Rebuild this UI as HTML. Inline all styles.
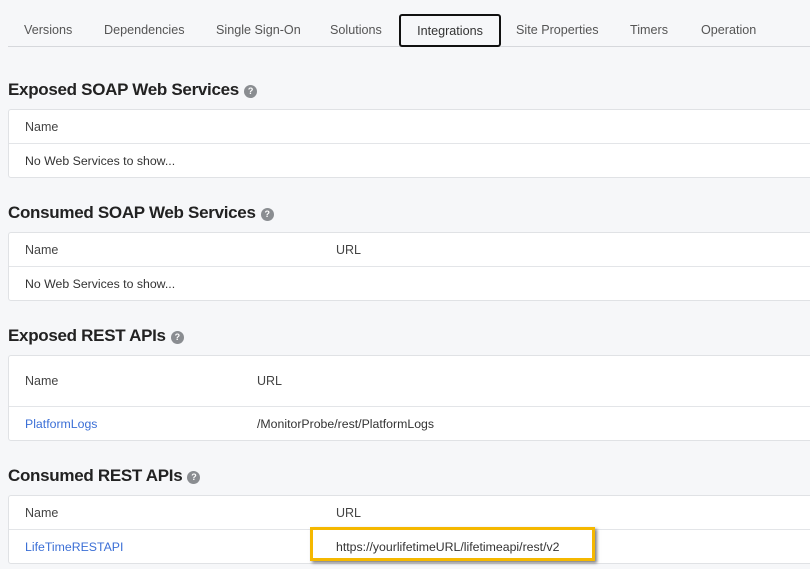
<!DOCTYPE html>
<html><head><style>
*{box-sizing:border-box;margin:0;padding:0}
body{width:810px;height:569px;overflow:hidden;background:#f6f7f9;font-family:"Liberation Sans",sans-serif;color:#333;position:relative}
.tabs{position:absolute;left:8px;right:0;top:46px;border-top:1px solid #d6d8dc}
.tab{position:absolute;top:23px;font-size:12.6px;color:#555}
.tabsel{position:absolute;left:399px;top:14px;width:102px;height:33px;border:2px solid #111;border-radius:3px;background:#f6f7f9;font-size:12.6px;color:#333;text-align:center;line-height:31px}
h2{position:absolute;left:8px;font-size:17px;font-weight:bold;color:#222;letter-spacing:-0.3px}
.q{display:inline-block;width:13px;height:13px;border-radius:50%;background:#8a8d91;color:#fff;font-size:9px;text-align:center;line-height:13px;vertical-align:1px;margin-left:5px}
.panel{position:absolute;left:8px;width:810px;background:#fff;border:1px solid #e0e2e5;border-radius:3px}
.row{position:relative;border-top:1px solid #e3e5e8;font-size:12.3px}
.row:first-child{border-top:none}
.c{position:absolute;top:50%;transform:translateY(-50%)}
.hd{font-weight:normal;color:#444;font-size:12.5px}
a{color:#3b6fd6;text-decoration:none}
.hl{position:absolute;left:310px;top:527px;width:285px;height:34px;border:3px solid #f5b800;box-shadow:2px 2px 3px rgba(0,0,0,.5)}
</style></head><body>
<div class="tabs"></div>
<div class="tab" style="left:24px">Versions</div>
<div class="tab" style="left:104px">Dependencies</div>
<div class="tab" style="left:216px">Single Sign-On</div>
<div class="tab" style="left:330px">Solutions</div>
<div class="tabsel">Integrations</div>
<div class="tab" style="left:516px">Site Properties</div>
<div class="tab" style="left:630px">Timers</div>
<div class="tab" style="left:701px">Operation</div>

<h2 style="top:80px">Exposed SOAP Web Services<span class="q">?</span></h2>
<div class="panel" style="top:109px">
<div class="row" style="height:33px"><span class="c hd" style="left:16px">Name</span></div>
<div class="row" style="height:34px"><span class="c" style="left:16px">No Web Services to show...</span></div>
</div>

<h2 style="top:203px">Consumed SOAP Web Services<span class="q">?</span></h2>
<div class="panel" style="top:232px">
<div class="row" style="height:33px"><span class="c hd" style="left:16px">Name</span><span class="c hd" style="left:327px">URL</span></div>
<div class="row" style="height:34px"><span class="c" style="left:16px">No Web Services to show...</span></div>
</div>

<h2 style="top:326px">Exposed REST APIs<span class="q">?</span></h2>
<div class="panel" style="top:355px">
<div class="row" style="height:50px"><span class="c hd" style="left:16px">Name</span><span class="c hd" style="left:248px">URL</span></div>
<div class="row" style="height:34px"><span class="c" style="left:16px"><a>PlatformLogs</a></span><span class="c" style="left:248px">/MonitorProbe/rest/PlatformLogs</span></div>
</div>

<h2 style="top:466px">Consumed REST APIs<span class="q">?</span></h2>
<div class="panel" style="top:495px">
<div class="row" style="height:33px"><span class="c hd" style="left:16px">Name</span><span class="c hd" style="left:327px">URL</span></div>
<div class="row" style="height:34px"><span class="c" style="left:16px"><a>LifeTimeRESTAPI</a></span><span class="c" style="left:327px">https://yourlifetimeURL/lifetimeapi/rest/v2</span></div>
</div>
<div class="hl"></div>
</body></html>
